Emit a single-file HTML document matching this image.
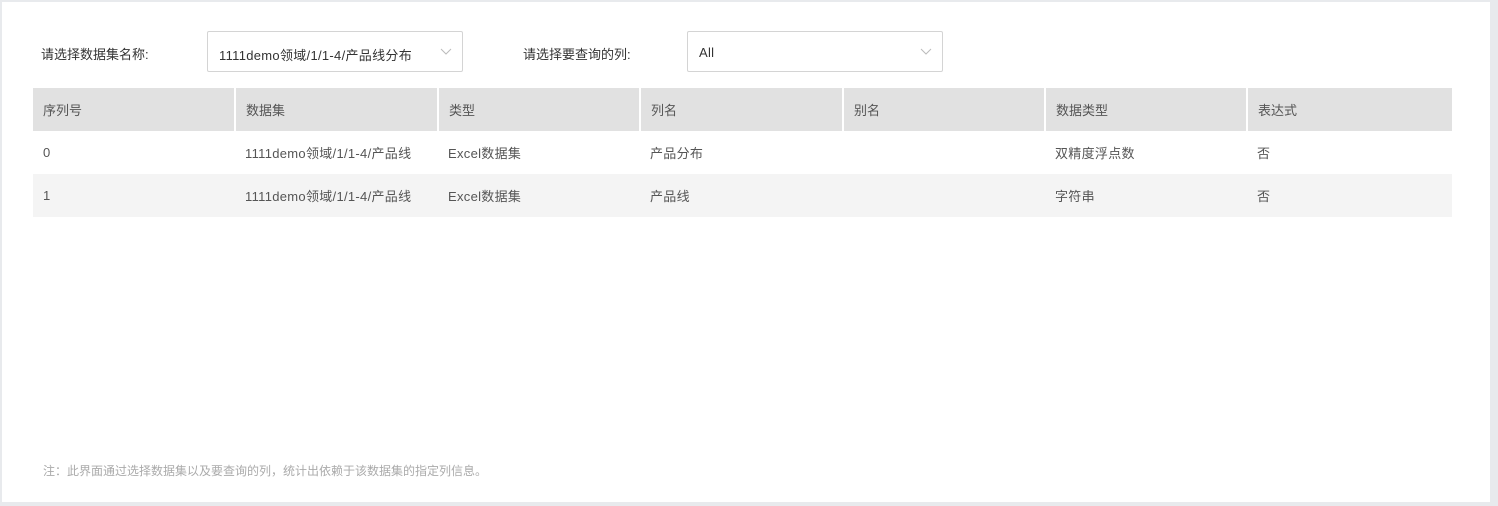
<!DOCTYPE html><html><head><meta charset="utf-8"><style>
body{margin:0;width:1498px;height:506px;background:#e8eaed;font-family:"Liberation Sans","Noto Sans CJK SC",sans-serif;font-size:13px;color:#555;position:relative;overflow:hidden}
.p{position:absolute;left:2px;top:2px;width:1488px;height:500px;background:#fff}
.a{position:absolute;white-space:nowrap}
.sel{position:absolute;height:41px;border:1px solid #d4d4d4;border-radius:2px;box-sizing:border-box}
.sel span{position:absolute;left:11px;top:13px;color:#333;letter-spacing:0.3px}
.sel svg{position:absolute;right:10px;top:16px}
table{position:absolute;left:33px;top:88px;border-collapse:collapse;width:1419px}
td{height:43px;padding:0 0 0 10px;box-sizing:border-box;vertical-align:middle;letter-spacing:0.3px}
th{height:43px;background:#e1e1e1;text-align:left;font-weight:normal;padding:0 0 0 10px;border-left:2px solid #fff;color:#555}
th:first-child{border-left:none}
tr.g td{background:#f4f4f4}
</style></head><body><div class="p"></div>
<div class="a" style="left:41px;top:44px;color:#333">请选择数据集名称:</div>
<div class="sel" style="left:207px;top:31px;width:256px"><span>1111demo领域/1/1-4/产品线分布</span><svg width="12" height="8"><path d="M1 1l5 5 5-5" fill="none" stroke="#bbb"/></svg></div>
<div class="a" style="left:523px;top:44px;color:#333">请选择要查询的列:</div>
<div class="sel" style="left:687px;top:31px;width:256px"><span>All</span><svg width="12" height="8"><path d="M1 1l5 5 5-5" fill="none" stroke="#bbb"/></svg></div>
<table><colgroup><col style="width:202px"><col style="width:203px"><col style="width:202px"><col style="width:203px"><col style="width:202px"><col style="width:202px"><col></colgroup>
<tr><th>序列号</th><th>数据集</th><th>类型</th><th>列名</th><th>别名</th><th>数据类型</th><th>表达式</th></tr>
<tr><td>0</td><td>1111demo领域/1/1-4/产品线</td><td>Excel数据集</td><td>产品分布</td><td></td><td>双精度浮点数</td><td>否</td></tr>
<tr class="g"><td>1</td><td>1111demo领域/1/1-4/产品线</td><td>Excel数据集</td><td>产品线</td><td></td><td>字符串</td><td>否</td></tr>
</table>
<div class="a" style="left:43px;top:462px;color:#aaa;font-size:12px">注：此界面通过选择数据集以及要查询的列，统计出依赖于该数据集的指定列信息。</div>
</body></html>
